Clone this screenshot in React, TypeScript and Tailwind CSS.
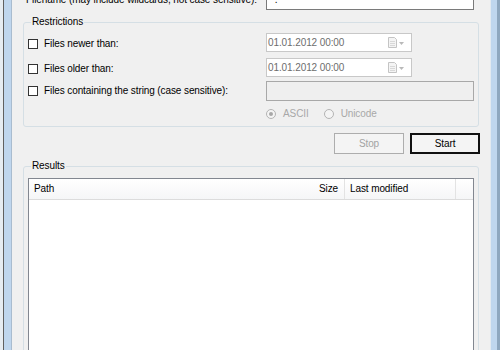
import React from "react";

function Checkbox() {
  return <div className="w-[10px] h-[10px] border border-[#333333] bg-white shrink-0" />;
}

function CalIcon() {
  return (
    <svg width="18" height="11" viewBox="0 0 18 11" className="shrink-0">
      <path d="M0.5 0.5 H6.5 L8.5 2.5 V10.5 H0.5 Z" fill="#f4f4f4" stroke="#c4c4c4" />
      <path d="M2 4.5 H7 M2 6.5 H7 M2 8.5 H7" stroke="#d8d8d8" />
      <path d="M11 5 L16 5 L13.5 8 Z" fill="#b9b9b9" />
    </svg>
  );
}

function DatePicker() {
  return (
    <div className="w-[146px] h-[19px] border border-[#c8c8c8] bg-white flex items-center pl-[1px] pr-[5px] shrink-0">
      <span className="text-[#6d6d6d] flex-1">01.01.2012 00:00</span>
      <CalIcon />
    </div>
  );
}

function Radio({ checked }: { checked?: boolean }) {
  return (
    <div className="w-[10px] h-[10px] rounded-full border border-[#b4b4b4] bg-[#f4f4f4] flex items-center justify-center shrink-0">
      {checked && <div className="w-[4px] h-[4px] rounded-full bg-[#a8a8a8]" />}
    </div>
  );
}

export default function App() {
  return (
    <div
      className="w-[500px] h-[350px] overflow-hidden flex bg-[#f0f0f0] text-[10px] leading-[12px] text-black tracking-[-0.1px]"
      style={{ fontFamily: '"Liberation Sans", Arial, sans-serif' }}
    >
      {/* left frame */}
      <div className="w-[12px] h-full flex shrink-0">
        <div className="w-[3px] bg-[#e6ecf2]" />
        <div className="w-[1px] bg-[#606060]" />
        <div className="w-[7px] bg-[#bfd6ee]" />
        <div className="w-[1px] bg-[#a9bccf]" />
      </div>

      {/* client */}
      <div className="flex-1 flex flex-col px-[11px] min-w-0">
        {/* filename row */}
        <div className="-mt-[10px] h-[20px] flex items-center pr-[5px] shrink-0">
          <span className="ml-[3px]">Filename (may include wildcards, not case sensitive):</span>
          <div className="ml-auto w-[208px] h-[20px] border border-[#7a7a7a] bg-white flex items-center pl-[4px]">
            <span>*.*</span>
          </div>
        </div>

        {/* Restrictions */}
        <div className="relative mt-[12px] border border-[#d5dfe5] rounded-[3px] pt-[10px] pl-[4px] pr-[4px] pb-[6px] shrink-0">
          <span className="absolute -top-[7px] left-[7px] px-[1px] bg-[#f0f0f0]">Restrictions</span>

          <div className="flex items-center h-[19px]">
            <div className="w-[238px] flex items-center gap-[6px] pt-[3px]">
              <Checkbox />
              <span>Files newer than:</span>
            </div>
            <DatePicker />
          </div>

          <div className="flex items-center h-[19px] mt-[6px]">
            <div className="w-[238px] flex items-center gap-[6px] pt-[2px]">
              <Checkbox />
              <span>Files older than:</span>
            </div>
            <DatePicker />
          </div>

          <div className="flex items-center h-[20px] mt-[4px]">
            <div className="w-[238px] flex items-center gap-[6px]">
              <Checkbox />
              <span>Files containing the string (case sensitive):</span>
            </div>
            <div className="flex-1 h-[20px] border border-[#a8a8a8] bg-[#efefef]" />
          </div>

          <div className="flex items-center h-[12px] mt-[7px] pl-[238px] text-[#a8a8a8]">
            <Radio checked />
            <span className="ml-[7px]">ASCII</span>
            <div className="ml-[15px]">
              <Radio />
            </div>
            <span className="ml-[7px]">Unicode</span>
          </div>
        </div>

        {/* buttons */}
        <div className="flex justify-end gap-[6px] mt-[6px] -mr-[1px] shrink-0">
          <div className="w-[70px] h-[21px] border border-[#adadad] bg-[#f4f4f4] flex items-center justify-center text-[#a3a3a3]">
            Stop
          </div>
          <div className="w-[70px] h-[21px] border-2 border-[#111111] bg-[#f4f4f4] flex items-center justify-center">
            Start
          </div>
        </div>

        {/* Results */}
        <div className="relative mt-[12px] border border-[#d5dfe5] rounded-[3px] pt-[11px] pl-[4px] pr-[4px] shrink-0">
          <span className="absolute -top-[7px] left-[7px] px-[1px] bg-[#f0f0f0]">Results</span>
          <div className="h-[200px] border border-[#828790] bg-white">
            <div className="h-[21px] flex bg-gradient-to-b from-white to-[#f5f6f7] border-b border-[#dcdcdc]">
              <div className="w-[260px] flex items-center pl-[5px]">Path</div>
              <div className="w-[56px] flex items-center justify-end pr-[6px] border-r border-[#e3e3e3]">Size</div>
              <div className="w-[111px] flex items-center pl-[5px] border-r border-[#e3e3e3]">Last modified</div>
              <div className="flex-1" />
            </div>
          </div>
        </div>
      </div>

      {/* right frame */}
      <div className="w-[10px] h-full flex shrink-0">
        <div className="w-[1px] bg-[#e2e9f0]" />
        <div className="w-[6px] bg-[#bfd6ee]" />
        <div className="w-[3px] bg-[#8ea7bf]" />
      </div>
    </div>
  );
}
